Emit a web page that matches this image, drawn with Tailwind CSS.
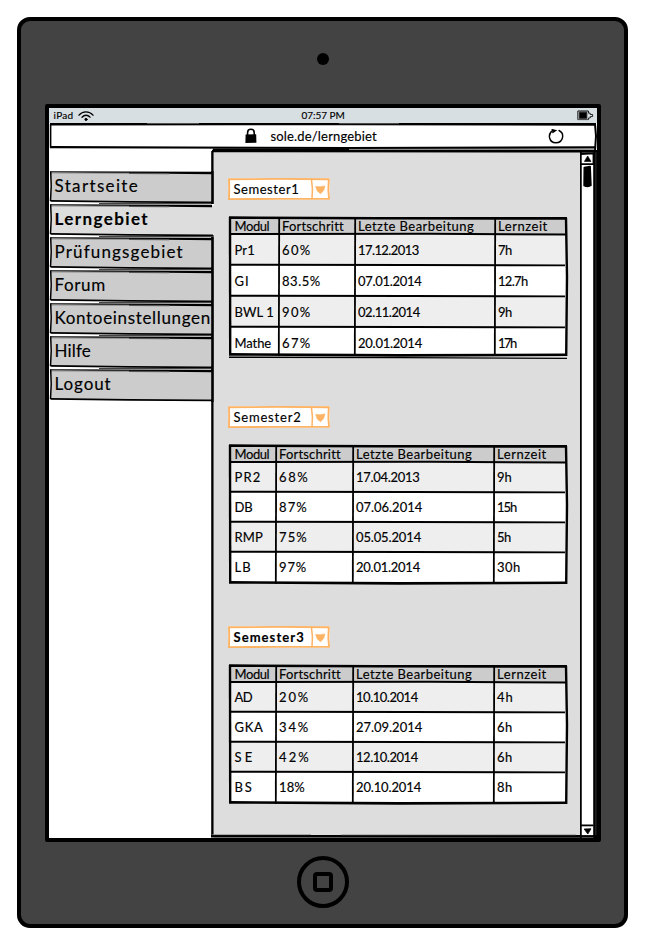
<!DOCTYPE html>
<html lang="de">
<head>
<meta charset="utf-8">
<title>sole.de/lerngebiet</title>
<script src="https://cdn.jsdelivr.net/npm/@tailwindcss/browser@4"></script>
</head>
<body class="bg-white">
<div class="h-[946px] w-[646px] overflow-hidden pl-[17px] pt-[17px] font-['Lato','Open_Sans',sans-serif] text-black [-webkit-text-stroke:0.15px_#000]">
  <div class="flex h-[911px] w-[611px] flex-col items-center rounded-[13px] border-4 border-black bg-[#434343]">
    <div class="mt-[32px] h-[12px] w-[12px] rounded-full bg-black"></div>

    <div class="mt-[39px] flex h-[738px] w-[556px] flex-col rounded-[2px] border-4 border-black bg-white">
      <!-- status bar -->
      <div class="flex h-[15px] items-center bg-[#d7dfe3] text-[10px] leading-[15px]">
        <span class="ml-[5px] w-[24px]"><span data-w="18.5">iPad</span></span>
        <svg class="h-[12px] w-[16px]" viewBox="0 0 16 12" fill="none" stroke="#000" stroke-width="1.3" stroke-linecap="round">
          <path d="M1 5.2C4.5 .9 11.2 .7 15 5.2M4 7.2C6.4 4.6 9.8 4.6 12 7.2"/><circle cx="8" cy="9.4" r="1.1" fill="#000" stroke-width="1"/>
        </svg>
        <span class="ml-[208px] w-[60px]"><span data-w="42">07:57 PM</span></span>
        <svg class="ml-[215px] h-[11px] w-[17px]" viewBox="0 0 17 11" fill="none" stroke="#222">
          <path d="M.8 1H11.5V3.2H13.2V4.5H15.6V6.6H13.2V8H11.5V9.6H.8Z"/><path d="M1 1.2H11M1 9.4H11" stroke="#555"/><path d="M2.3 2.3H9.8V8.3H2.3Z" fill="#000"/>
        </svg>
      </div>

      <!-- address bar -->
      <div class="relative flex h-[27px] items-center bg-white">
        <svg class="ml-[196px] mt-[-1px] h-[16px] w-[12px]" viewBox="0 0 12 16"><path d="M2.6 7V4.4C2.6 .1 9.2 .1 9.2 4.4V7" fill="none" stroke="#000" stroke-width="1.6"/><path d="M.6 6.6L11.2 6.3L11.4 14.8L.4 15Z"/></svg>
        <span class="ml-[14px] mt-[-2px] w-[110px] text-[13px] leading-[18px]"><span data-w="105">sole.de/lerngebiet</span></span>
        <svg class="ml-[167px] mt-[-1px] h-[16px] w-[16px]" viewBox="0 0 16 16" fill="none" stroke="#000" stroke-width="1.4" stroke-linecap="round"><path d="M4.6 2.7C-.8 6.2 1 14.7 7.8 14.7C15.3 14.7 17 5.5 11 2.5"/><path d="M4 1.6L7.8 2.6L4.8 4.6" fill="#000" stroke-width="1.2"/></svg>
        <svg class="absolute left-0 top-0 z-20 h-[30px] w-[548px]" viewBox="0 0 548 30" fill="none" stroke="#000">
          <path d="M1 1.2L300 1L547 1.4" stroke-width="2.6"/>
          <path d="M1.6 1V24.5" stroke-width="1.6"/>
          <path d="M1 24.2L300 25L547 24.4" stroke-width="2.2"/>
          <path d="M163 28L546 28.2" stroke-width="2.6"/>
          <path d="M546 1L547 13L546 28" stroke-width="2"/>
          <path d="M164 26.2H300" stroke-width="1.4"/>
          <path d="M98 .5H150M290 .6H350" stroke="#666" stroke-width=".8"/>
          <path d="M300 26.4H545" stroke="#777" stroke-width=".8"/>
        </svg>
      </div>

      <div class="flex h-[688px]">
        <!-- navigation tabs -->
        <nav id="nav" class="relative z-10 flex h-full w-[165px] flex-col pt-[21px]"></nav>

        <!-- content -->
        <main class="relative flex h-full w-[366px] flex-col bg-[#ddd] pl-[15px] pt-[28px]" id="main">
          <svg class="absolute -left-[3px] top-0 h-[688px] w-[369px]" viewBox="0 0 369 688" fill="none" stroke="#000">
            <path d="M1.4 1V54M1.4 85V687" stroke-width="2.4"/>
            <path d="M0 686.2L369 686.4" stroke-width="2.6"/>
            <path d="M1 684.6H100M130 684.8H365" stroke="#888" stroke-width=".7"/>
          </svg>
        </main>

        <!-- scrollbar -->
        <svg class="h-[688px] w-[17px]" viewBox="0 0 17 688" fill="none" stroke="#000">
          <path d="M0 0H17V688H0Z" fill="#fff" stroke="none"/>
          <path d="M.8 0V688" stroke-width="1.9"/>
          <path d="M13.2 0H17V688H13.2Z" fill="#000" stroke="none"/>
          <path d="M15.9 2V686" stroke="#555" stroke-width=".6"/>
          <path d="M1 1.3H16" stroke-width="2.4"/>
          <path d="M.8 4L13.5 3.4V14.2H.8Z" stroke-width="1.8" fill="#fff"/>
          <path d="M4.3 11.5L7.7 6L11 11.5Z" fill="#000" stroke-width=".6"/>
          <path d="M4.2 17.5L10.2 16.5L11 35.5Q8 37.4 4 35.6Z" fill="#000" stroke-width="1.4" stroke-linejoin="round"/>
          <path d="M1 675.4H13.5" stroke-width="1.8"/>
          <path d="M4.2 679L11 678.8L7.8 684Z" fill="#000" stroke-width=".8"/>
          <path d="M0 686.4H17" stroke-width="2.6"/>
        </svg>
      </div>
    </div>

    <!-- home button -->
    <div class="mt-[14px] flex h-[52px] w-[52px] items-center justify-center rounded-full border-4 border-black">
      <div class="h-[20px] w-[20px] rounded-[4px] border-4 border-black"></div>
    </div>
  </div>
</div>

<script>
const tabs = [['Startseite', 82], ['Lerngebiet', 92, true], ['Prüfungsgebiet', 127], ['Forum', 49.5], ['Kontoeinstellungen', 154.5], ['Hilfe', 35], ['Logout', 55]];

document.getElementById('nav').innerHTML = tabs.map(([label, w, on], i) => `
  <a class="relative block h-[33px] w-[165px] pl-[6px]">
    <svg class="absolute left-0 top-0 h-[33px] w-[165px]" viewBox="0 0 165 33" fill="none" stroke="#000">
      <path d="M2 1.5H${on ? 166 : 163}V30.5H2Z" fill="${on ? '#ddd' : '#ccc'}" stroke="none"/>
      <path d="M1 .2L163 .8V3.2L1 1.6Z" fill="#000" stroke="none"/>
      <path d="M2 2L80 2.4" stroke="#999" stroke-width="1.2"/>
      <path d="M80 2.3L120 2.7" stroke="#555" stroke-width="1.2"/>
      <path d="M1.7 .6L2.2 15L1.5 30" stroke-width="1.5"/>
      <path d="M1.5 29.8L80 30.9L164 31.4" stroke-width="1.8"/>
      ${i < 6 ? '<path d="M50 32.5H164" stroke="#444" stroke-width="1"/>' : ''}
      ${on ? '' : `<path d="M163.4 0V${i ? 33 : 35}" stroke-width="2.4"/>`}
    </svg>
    <span class="relative block text-[17px] leading-[29px] ${on ? 'font-bold' : ''}"><span data-w="${w}">${label}</span></span>
  </a>`).join('');

const colsA = [50, 76, 140, 72], colsB = [47, 77, 141, 73];
const head = [['Modul', 34], ['Fortschritt', 60], ['Letzte Bearbeitung', 114.5], ['Lernzeit', 48]];
const sections = [
  { name: 'Semester1', w: 64, cols: colsA, rows: [31, 31, 31, 28], gap: 'mb-[50px]', cell: 'pt-[8px]', extra: true, data: [
    [['Pr1', 19], ['60%', 27], ['17.12.2013', 60], ['7h', 13]],
    [['GI', 13], ['83.5%', 37], ['07.01.2014', 62.5], ['12.7h', 29]],
    [['BWL 1', 38], ['90%', 27], ['02.11.2014', 61], ['9h', 13]],
    [['Mathe', 35.5], ['67%', 27], ['20.01.2014', 63], ['17h', 18]]] },
  { name: 'Semester2', w: 66, cols: colsB, rows: [30, 30, 30, 31], gap: 'mb-[43px]', cell: 'pt-[7px]', data: [
    [['PR2', 24.5], ['68%', 27.5], ['17.04.2013', 62.5], ['9h', 13.5]],
    [['DB', 17], ['87%', 26.5], ['07.06.2014', 65], ['15h', 19]],
    [['RMP', 27], ['75%', 26.5], ['05.05.2014', 64], ['5h', 13]],
    [['LB', 15], ['97%', 26], ['20.01.2014', 63], ['30h', 22]]] },
  { name: 'Semester3', w: 69, bold: true, cols: colsB, rows: [30, 30, 30, 31], gap: '', cell: 'pt-[7px]', data: [
    [['AD', 17], ['20%', 28], ['10.10.2014', 61], ['4h', 14.5]],
    [['GKA', 27], ['34%', 28], ['27.09.2014', 65], ['6h', 14]],
    [['SE', 16.5], ['42%', 28.5], ['12.10.2014', 61], ['6h', 14]],
    [['BS', 16], ['18%', 24.5], ['20.10.2014', 64], ['8h', 14]]] }
];

function tableLines(s) {
  let d = '', x = 0, y = 17;
  const H = 17 + s.rows.reduce((a, b) => a + b);
  s.cols.slice(0, 3).forEach(c => { x += c; d += `<path d="M${x + .2} 1L${x - .2} ${H + 1}" stroke-width="1.8"/>`; });
  d += `<path d="M1 17L200 16.8L337 17.6" stroke-width="2"/>`;
  s.rows.slice(0, 3).forEach(r => { y += r; d += `<path d="M0 ${y - .3}L180 ${y}L336 ${y + .4}" stroke-width="1.9"/>`; });
  d += `<path d="M0 .6L150 1.2L338 1.4" stroke-width="2.6"/><path d="M1 0L1.2 ${H}" stroke-width="2.4"/><path d="M337 1L338 60L337.2 ${H + 1}" stroke-width="2.4"/>`;
  d += `<path d="M0 ${H - .6}L170 ${H + .4}L338 ${H - .2}" stroke-width="2.6"/>`;
  if (s.extra) d += `<path d="M0 ${H + 2.2}L170 ${H + 2.6}L338 ${H + 3.4}" stroke-width="1.4"/>`;
  return d;
}

document.getElementById('main').insertAdjacentHTML('beforeend', sections.map((s, k) => `
  <section class="relative ${s.gap} ${k === 1 ? 'pt-[1px]' : ''}">
    <div class="relative -ml-[1px] mb-[17px] flex h-[22px] w-[102px] items-center bg-white pl-[6px]">
      <svg class="absolute left-0 top-0 h-[22px] w-[102px]" viewBox="0 0 102 22" fill="none" stroke="#fdb363" stroke-width="1.9">
        <path d="M1 1.3L50 .9L100.8 1.2L100.4 12L101 20.8L50 20.9L1 21.1L1.2 10Z"/>
        <path d="M83.4 1Q85.2 11 84 21" stroke-width="1.5"/>
        <path d="M87.6 8.4Q92 9.2 97 7.9L95.6 12.5L92.6 15.8L89.4 13.2Z" fill="#fdb363" stroke-width=".6"/>
      </svg>
      <span class="relative -mt-[1px] text-[13px] leading-[18px] ${s.bold ? 'font-bold' : ''}"><span data-w="${s.w}">${s.name}</span></span>
    </div>
    <div class="relative">
      <div class="grid w-[338px] text-[13px]" style="grid-template-columns:${s.cols.map((c) => c + 'px').join(' ')};grid-template-rows:17px ${s.rows.map(r => r + 'px').join(' ')}">
        ${head.map(([t, w], j) => `<div class="bg-[#ccc] pt-[1px] leading-[17px] ${j ? 'pl-[3.5px]' : 'pl-[6px]'}"><span data-w="${w}">${t}</span></div>`).join('')}
        ${s.data.map((r, i) => r.map(([t, w], j) => `<div class="${i % 2 ? 'bg-white' : 'bg-[#eee]'} ${s.cell} leading-[17px] ${j ? 'pl-[3.5px]' : 'pl-[6px]'}"><span data-w="${w}">${t}</span></div>`).join('')).join('')}
      </div>
      <svg class="absolute left-0 top-0 h-[145px] w-[340px] overflow-visible" viewBox="0 0 340 145" fill="none" stroke="#000">${tableLines(s)}</svg>
    </div>
  </section>`).join(''));

/* Track every label to its nominal width; refit once styles have settled. */
function fit() {
  document.querySelectorAll('[data-w]').forEach(e => {
    e.style.whiteSpace = 'nowrap';
    e.style.letterSpacing = '0px';
    const n = e.textContent.length;
    e.style.letterSpacing = ((+e.dataset.w + 1.2 - e.getBoundingClientRect().width) / (n - 1)).toFixed(3) + 'px';
  });
}
fit();
addEventListener('load', fit);
requestAnimationFrame(fit);
document.fonts.ready.then(fit);
</script>
</body>
</html>
